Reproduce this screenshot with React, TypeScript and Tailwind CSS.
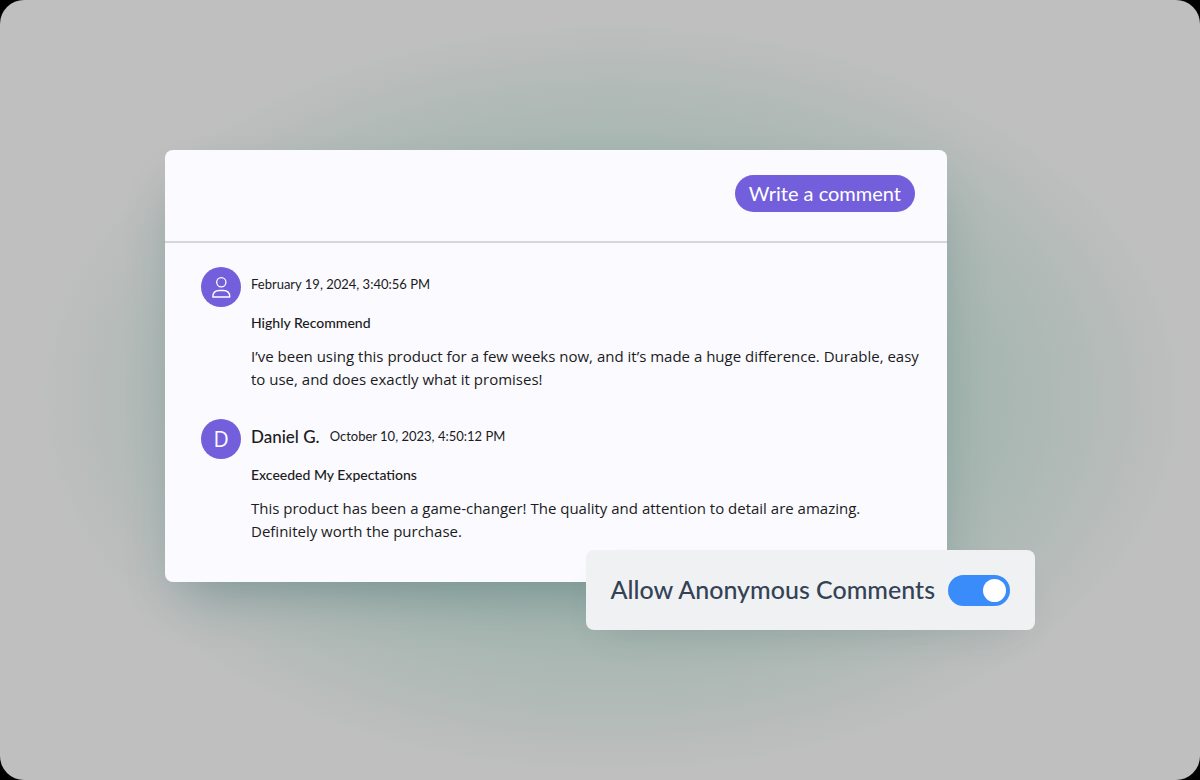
import { useId, useState } from "react";

interface Comment {
  id: number;
  author?: string;
  date: string;
  title: string;
  text: string;
}

const comments: Comment[] = [
  {
    id: 1,
    date: "February 19, 2024, 3:40:56 PM",
    title: "Highly Recommend",
    text: "I’ve been using this product for a few weeks now, and it’s made a huge difference. Durable, easy to use, and does exactly what it promises!",
  },
  {
    id: 2,
    author: "Daniel G.",
    date: "October 10, 2023, 4:50:12 PM",
    title: "Exceeded My Expectations",
    text: "This product has been a game-changer! The quality and attention to detail are amazing. Definitely worth the purchase.",
  },
];

const UserIcon = () => (
  <svg
    className="w-5 h-6"
    viewBox="0 0 20 24"
    fill="none"
    stroke="currentColor"
    strokeWidth="1.3"
    strokeLinejoin="round"
    aria-hidden="true"
  >
    <circle cx="10.3" cy="7.2" r="4.6" />
    <path d="M1.8 22c0-4.2 2.8-6.5 6.6-6.5h3.800c3.800 0 6.600 2.300 6.600 6.500z" />
  </svg>
);

const Avatar = ({ author }: { author?: string }) => (
  <div className="flex size-10 shrink-0 items-center justify-center rounded-full bg-[#735fdb] font-['Open_Sans',sans-serif] text-[21px] leading-none text-white">
    {author ? author[0] : <UserIcon />}
  </div>
);

const CommentItem = ({ comment }: { comment: Comment }) => (
  <article className="flex gap-[10px]">
    <Avatar author={comment.author} />
    <div className="min-w-0 flex-1 text-[#1b1b20]">
      <div className="flex h-9 items-center gap-[10px]">
        {comment.author && <span className="text-[17px] font-medium">{comment.author}</span>}
        <time className="text-[13px]">{comment.date}</time>
      </div>
      <h3 className="mt-[10px] text-[14px] leading-5 font-medium">{comment.title}</h3>
      <p className="mt-3 font-['Open_Sans',sans-serif] text-[15px] leading-[23px]">{comment.text}</p>
    </div>
  </article>
);

const Toggle = () => {
  const [enabled, setEnabled] = useState(true);
  const id = useId();

  return (
    <div className="relative -mt-8 flex h-20 items-center gap-[13px] self-end rounded-lg bg-[#eff1f2] px-[25px] shadow-[0_16px_40px_-20px_rgba(45,75,90,0.2)]">
      <label htmlFor={id} className="text-[25px] font-medium text-[#344256]">
        Allow Anonymous Comments
      </label>
      <input
        id={id}
        type="checkbox"
        role="switch"
        checked={enabled}
        onChange={(e) => setEnabled(e.target.checked)}
        className="h-[31px] w-[62px] shrink-0 cursor-pointer appearance-none rounded-full bg-gray-400 p-1 before:block before:size-[23px] before:rounded-full before:bg-white checked:bg-[#3b8cfb] checked:before:ml-auto"
      />
    </div>
  );
};

export default function App() {
  return (
    <div className="bg-black font-[Lato,sans-serif]">
      <main className="flex min-h-screen items-center justify-center rounded-3xl bg-[#bfbfbf] bg-[radial-gradient(ellipse_580px_380px_at_51%_51%,#9ab1a9_0%,#a3b5ae_58%,#b1bab7_80%,#bfbfbf_100%)]">
        <div className="flex w-full max-w-[870px] flex-col">
          <section className="mr-[88px] rounded-lg bg-[#fafaff] pb-[39px] shadow-[0_26px_48px_-18px_rgba(40,85,95,0.38)]">
            <header className="flex justify-end border-b-2 border-[#d5d5dc] px-8 pt-[25px] pb-[29px]">
              <button
                type="button"
                className="h-[37px] rounded-full bg-[#735fdb] px-[14px] pb-0.5 text-[20px] leading-none text-white"
              >
                Write a comment
              </button>
            </header>
            <div className="flex flex-col gap-7 pt-6 pr-5 pl-9">
              {comments.map((comment) => (
                <CommentItem key={comment.id} comment={comment} />
              ))}
            </div>
          </section>
          <Toggle />
        </div>
      </main>
    </div>
  );
}
